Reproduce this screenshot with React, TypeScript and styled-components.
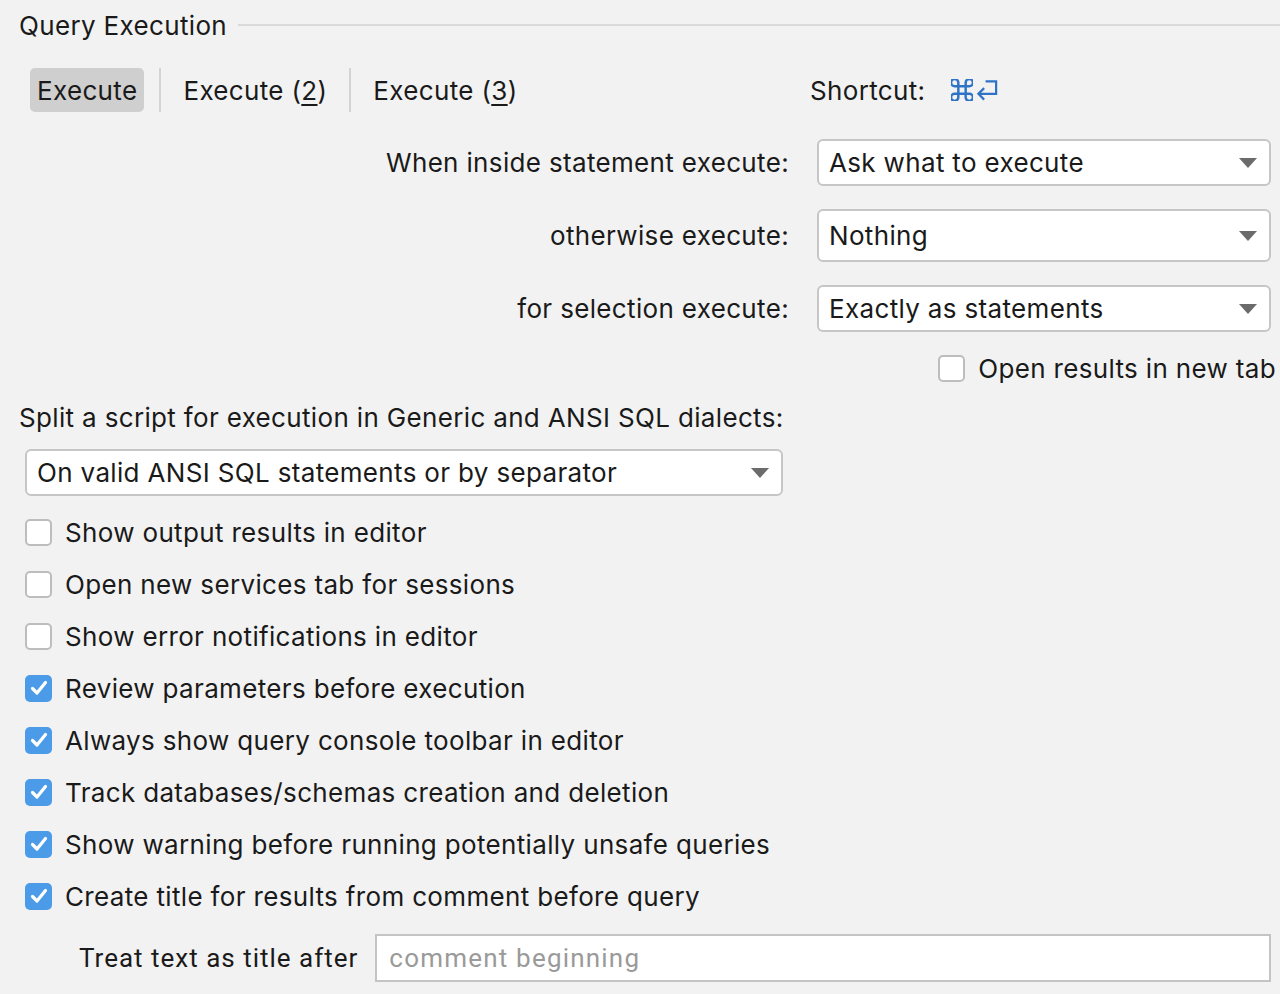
import React from 'react';
import styled, { createGlobalStyle } from 'styled-components';

const GlobalStyle = createGlobalStyle`
  html, body {
    margin: 0;
    padding: 0;
    background: #f2f2f2;
  }
  body {
    font-family: Inter, "Noto Sans", sans-serif;
    color: #1a1a1a;
  }
`;

const Page = styled.div`
  width: 1280px;
  height: 994px;
  overflow: hidden;
  box-sizing: border-box;
  padding: 8px 9px 0 19px;
  background: #f2f2f2;
  font-size: 26px;
  letter-spacing: 0.34px;
`;

const Header = styled.div`
  display: flex;
  align-items: center;
  height: 34px;
  margin-right: -9px;
`;

const HeaderTitle = styled.span`
  white-space: nowrap;
`;

const HeaderLine = styled.div`
  flex: 1;
  height: 2px;
  background: #dadada;
  margin-left: 11px;
`;

const TopGrid = styled.div`
  display: grid;
  grid-template-columns: 770px 1fr;
  column-gap: 28px;
  align-items: center;
  margin-top: 26px;
`;

const Tabs = styled.div`
  display: flex;
  align-items: center;
  height: 44px;
  margin-left: 11px;
`;

const Tab = styled.div<{ $active?: boolean }>`
  height: 44px;
  display: flex;
  align-items: center;
  padding: 0 7px;
  border-radius: 5px;
  background: ${({ $active }) => ($active ? '#cfcfcf' : 'transparent')};
  white-space: nowrap;
`;

const Mnemonic = styled.span`
  text-decoration: underline;
  text-underline-offset: 4px;
  text-decoration-thickness: 2px;
`;

const TabSeparator = styled.div`
  width: 2px;
  height: 44px;
  background: #d4d4d4;
  margin: 0 15px;
`;

const Shortcut = styled.div`
  display: flex;
  align-items: center;
  gap: 26px;
  margin-left: -7px;
`;

const ShortcutKeys = styled.div`
  display: flex;
  align-items: center;
  gap: 3px;
  color: #2f73c6;
`;

const FieldLabel = styled.div<{ $mt?: number }>`
  text-align: right;
  white-space: nowrap;
  margin-top: ${({ $mt }) => $mt ?? 0}px;
`;

const Combo = styled.div<{ $height?: number; $mt?: number; $width?: number }>`
  box-sizing: border-box;
  height: ${({ $height }) => $height ?? 47}px;
  width: ${({ $width }) => ($width ? `${$width}px` : 'auto')};
  margin-top: ${({ $mt }) => $mt ?? 0}px;
  background: #fff;
  border: 2px solid #c6c6c6;
  border-radius: 6px;
  display: flex;
  align-items: center;
  justify-content: space-between;
  padding: 0 12px 0 10px;
  white-space: nowrap;
`;

const Arrow = styled.div`
  width: 0;
  height: 0;
  border-left: 9px solid transparent;
  border-right: 9px solid transparent;
  border-top: 10px solid #6b6b6b;
`;

const CheckRow = styled.label<{ $height?: number }>`
  display: flex;
  align-items: center;
  gap: 13px;
  height: ${({ $height }) => $height ?? 52}px;
  white-space: nowrap;
`;

const Box = styled.span<{ $checked?: boolean }>`
  box-sizing: border-box;
  width: 27px;
  height: 27px;
  flex: none;
  border-radius: 5px;
  display: flex;
  align-items: center;
  justify-content: center;
  background: ${({ $checked }) => ($checked ? '#4b9be8' : '#fff')};
  border: ${({ $checked }) => ($checked ? 'none' : '2px solid #bdbdbd')};
`;

const OpenResults = styled.div`
  justify-self: end;
  margin-right: -5px;
  margin-top: 23px;
`;

const SplitLabel = styled.div`
  margin-top: 19px;
  height: 32px;
  display: flex;
  align-items: center;
`;

const SplitCombo = styled(Combo)`
  margin: 16px 0 10px 6px;
`;

const CheckList = styled.div`
  margin-left: 6px;
`;

const TitleRow = styled.div`
  display: flex;
  align-items: center;
  gap: 17px;
  margin-top: 12px;
  padding-left: 60px;
`;

const TitleLabel = styled.span`
  font-family: Roboto, "Liberation Sans", sans-serif;
  letter-spacing: 1px;
  white-space: nowrap;
`;

const TextField = styled.div`
  flex: 1;
  box-sizing: border-box;
  height: 48px;
  background: #fff;
  border: 2px solid #c4c4c4;
  display: flex;
  align-items: center;
  padding-left: 12px;
  font-family: Roboto, "Liberation Sans", sans-serif;
  letter-spacing: 1.2px;
  color: #9a9a9a;
`;

const Check = () => (
  <svg width="18" height="16" viewBox="0 0 18 16">
    <path d="M2.5 8.5 L7 13 L15.5 2.5" fill="none" stroke="#fff" strokeWidth="3.2" strokeLinecap="round" strokeLinejoin="round" />
  </svg>
);

const CommandIcon = () => (
  <svg width="22" height="22" viewBox="3 3 18 18" fill="none" stroke="currentColor" strokeWidth="2">
    <path d="M15 6v12a3 3 0 1 0 3-3H6a3 3 0 1 0 3 3V6a3 3 0 1 0-3 3h12a3 3 0 1 0-3-3" />
  </svg>
);

const ReturnIcon = () => (
  <svg width="23" height="23" viewBox="0 0 24 24" fill="none" stroke="currentColor" strokeWidth="2.3" strokeLinejoin="miter">
    <path d="M10 2.5h11v13H2.5" />
    <path d="M8.5 9.5l-6 6 6 6" />
  </svg>
);

const Checkbox: React.FC<{ checked?: boolean; label: string }> = ({ checked, label }) => (
  <CheckRow>
    <Box $checked={checked}>{checked && <Check />}</Box>
    {label}
  </CheckRow>
);

const options: { label: string; checked: boolean }[] = [
  { label: 'Show output results in editor', checked: false },
  { label: 'Open new services tab for sessions', checked: false },
  { label: 'Show error notifications in editor', checked: false },
  { label: 'Review parameters before execution', checked: true },
  { label: 'Always show query console toolbar in editor', checked: true },
  { label: 'Track databases/schemas creation and deletion', checked: true },
  { label: 'Show warning before running potentially unsafe queries', checked: true },
  { label: 'Create title for results from comment before query', checked: true },
];

export default function App() {
  return (
    <>
      <GlobalStyle />
      <Page>
        <Header>
          <HeaderTitle>Query Execution</HeaderTitle>
          <HeaderLine />
        </Header>

        <TopGrid>
          <Tabs>
            <Tab $active>Execute</Tab>
            <TabSeparator />
            <Tab>
              Execute (<Mnemonic>2</Mnemonic>)
            </Tab>
            <TabSeparator />
            <Tab>
              Execute (<Mnemonic>3</Mnemonic>)
            </Tab>
          </Tabs>
          <Shortcut>
            Shortcut:
            <ShortcutKeys>
              <CommandIcon />
              <ReturnIcon />
            </ShortcutKeys>
          </Shortcut>

          <FieldLabel $mt={27}>When inside statement execute:</FieldLabel>
          <Combo $mt={27}>
            Ask what to execute
            <Arrow />
          </Combo>

          <FieldLabel $mt={23}>otherwise execute:</FieldLabel>
          <Combo $mt={23} $height={53}>
            Nothing
            <Arrow />
          </Combo>

          <FieldLabel $mt={23}>for selection execute:</FieldLabel>
          <Combo $mt={23}>
            Exactly as statements
            <Arrow />
          </Combo>

          <div />
          <OpenResults>
            <CheckRow $height={27}>
              <Box />
              Open results in new tab
            </CheckRow>
          </OpenResults>
        </TopGrid>

        <SplitLabel>Split a script for execution in Generic and ANSI SQL dialects:</SplitLabel>
        <SplitCombo $width={758}>
          On valid ANSI SQL statements or by separator
          <Arrow />
        </SplitCombo>

        <CheckList>
          {options.map((o) => (
            <Checkbox key={o.label} label={o.label} checked={o.checked} />
          ))}
        </CheckList>

        <TitleRow>
          <TitleLabel>Treat text as title after</TitleLabel>
          <TextField>comment beginning</TextField>
        </TitleRow>
      </Page>
    </>
  );
}
